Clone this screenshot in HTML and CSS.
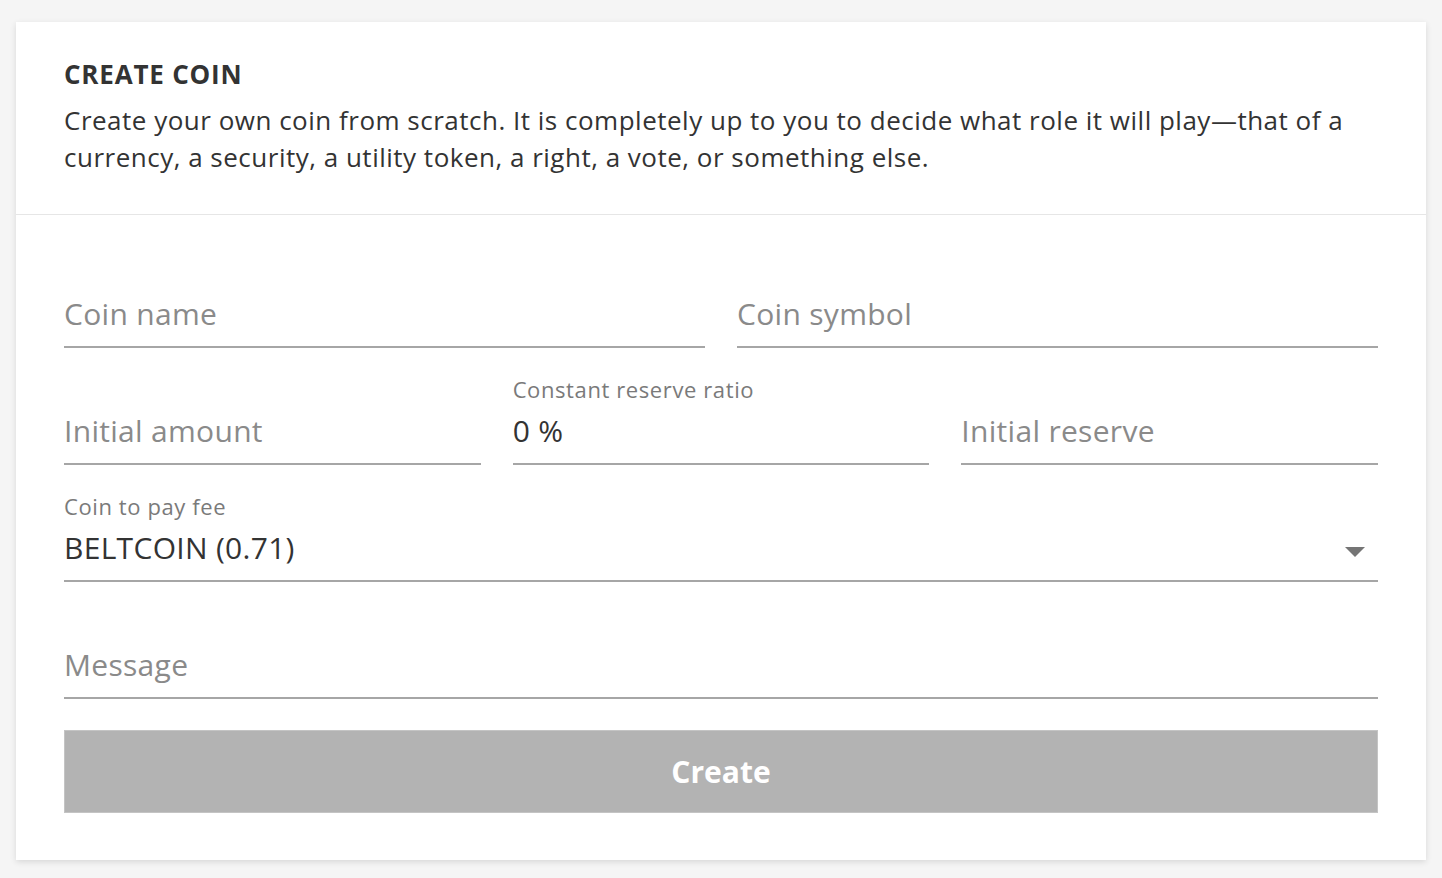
FILE: index.html
```html
<!DOCTYPE html>
<html>
<head>
<meta charset="utf-8">
<link rel="stylesheet" href="styles.css">
</head>
<body>
<div class="card">
  <div class="card-head">
    <h1 class="title">CREATE COIN</h1>
    <p class="desc">Create your own coin from scratch. It is completely up to you to decide what role it will play—that of a currency, a security, a utility token, a right, a vote, or something else.</p>
  </div>
  <form class="form">
    <div class="row row-2">
      <div class="field"><span class="label"></span><div class="input placeholder">Coin name</div></div>
      <div class="field"><span class="label"></span><div class="input placeholder">Coin symbol</div></div>
    </div>
    <div class="row row-3">
      <div class="field"><span class="label"></span><div class="input placeholder">Initial amount</div></div>
      <div class="field"><span class="label">Constant reserve ratio</span><div class="input value">0 %</div></div>
      <div class="field"><span class="label"></span><div class="input placeholder">Initial reserve</div></div>
    </div>
    <div class="row">
      <div class="field"><span class="label">Coin to pay fee</span><div class="input value select">BELTCOIN (0.71)<span class="arrow"></span></div></div>
    </div>
    <div class="row">
      <div class="field"><span class="label"></span><div class="input placeholder">Message</div></div>
    </div>
    <div class="btn">Create</div>
  </form>
</div>
</body>
</html>
```
FILE: styles.css
```css
html, body { margin: 0; padding: 0; }
body {
  background: #f5f5f5;
  padding: 22px 16px 18px;
  font-family: "Open Sans", "Noto Sans", sans-serif;
  color: #333;
}
.card {
  background: #fff;
  box-shadow: 0 2px 6px rgba(0,0,0,0.12);
}
.card-head {
  padding: 36px 48px 38px;
  border-bottom: 1px solid #e6e6e6;
}
.title {
  margin: 0;
  font-size: 26px;
  letter-spacing: 0.8px;
  line-height: 32px;
  font-weight: 700;
  color: #333;
}
.desc {
  margin: 12px 0 0;
  font-size: 26px;
  letter-spacing: 0.5px;
  line-height: 37px;
  color: #333;
}
.form {
  padding: 48px 48px 47px;
  display: flex;
  flex-direction: column;
  gap: 32px;
}
.row { display: grid; grid-template-columns: 1fr; column-gap: 32px; }
.row-2 { grid-template-columns: 1fr 1fr; }
.row-3 { grid-template-columns: 1fr 1fr 1fr; }
.field { display: flex; flex-direction: column; }
.label {
  height: 24px;
  line-height: 18px;
  font-size: 22px;
  letter-spacing: 0.6px;
  color: #7a7a7a;
  margin-bottom: 7px;
}
.input {
  height: 39px;
  padding: 0 0 13px;
  line-height: 39px;
  font-size: 30px;
  letter-spacing: 0.3px;
  border-bottom: 2px solid #a6a6a6;
  position: relative;
}
.placeholder { color: #8a8a8a; }
.value { color: #333; }
.arrow {
  position: absolute;
  right: 13px;
  top: 19px;
  width: 0; height: 0;
  border-left: 10px solid transparent;
  border-right: 10px solid transparent;
  border-top: 10px solid #757575;
}
.btn {
  margin-top: -1px;
  height: 81px;
  line-height: 81px;
  background: #b3b3b3;
  border: 1px solid #c4c4c4;
  color: #fff;
  font-weight: 700;
  font-size: 30px;
  text-align: center;
}
```
